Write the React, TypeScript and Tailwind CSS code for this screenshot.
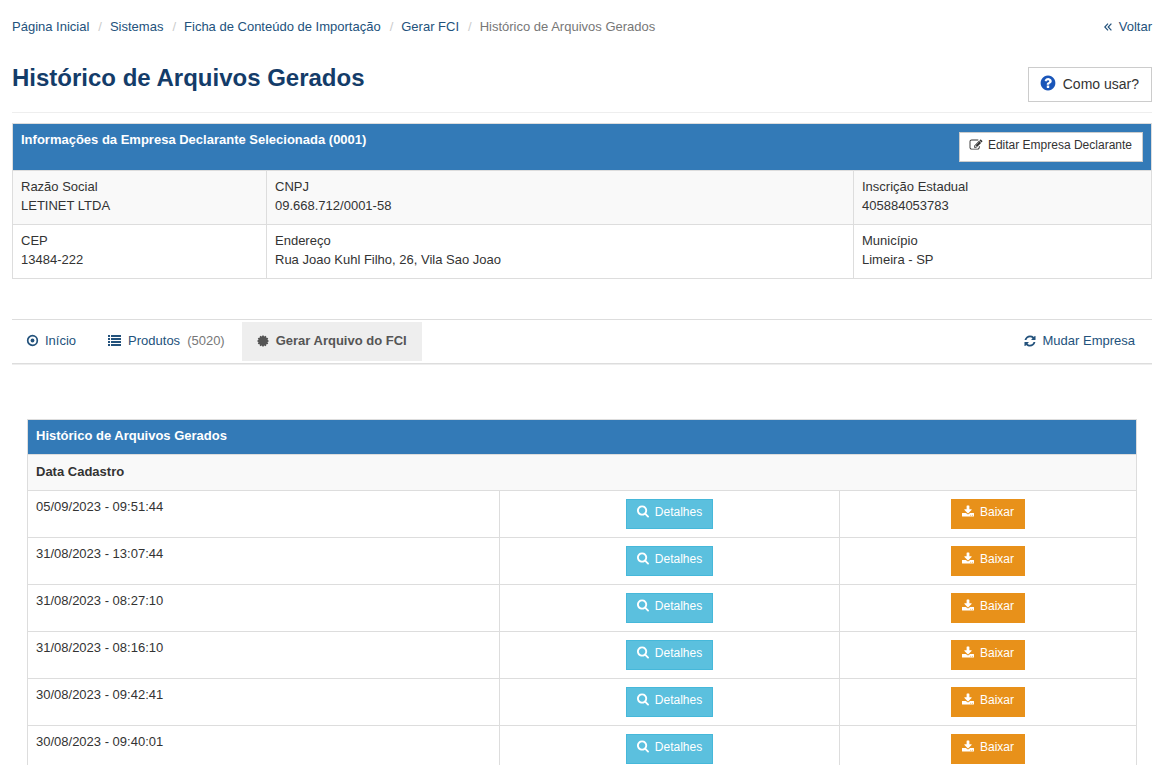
import type { ReactNode } from "react";
import clsx from "clsx";

const BREADCRUMBS = ["Página Inicial", "Sistemas", "Ficha de Conteúdo de Importação", "Gerar FCI"];

const EMPRESA = [
  [
    { label: "Razão Social", value: "LETINET LTDA" },
    { label: "CNPJ", value: "09.668.712/0001-58" },
    { label: "Inscrição Estadual", value: "405884053783" },
  ],
  [
    { label: "CEP", value: "13484-222" },
    { label: "Endereço", value: "Rua Joao Kuhl Filho, 26, Vila Sao Joao" },
    { label: "Município", value: "Limeira - SP" },
  ],
];

const ARQUIVOS = [
  "05/09/2023 - 09:51:44",
  "31/08/2023 - 13:07:44",
  "31/08/2023 - 08:27:10",
  "31/08/2023 - 08:16:10",
  "30/08/2023 - 09:42:41",
  "30/08/2023 - 09:40:01",
];

const ICONS = {
  search:
    "M1216 832q0-185-131.5-316.5t-316.5-131.5-316.5 131.5-131.5 316.5 131.5 316.5 316.5 131.5 316.5-131.5 131.5-316.5zm512 832q0 52-38 90t-90 38q-54 0-90-38l-343-342q-179 124-399 124-143 0-273.5-55.5t-225-150-150-225-55.5-273.5 55.5-273.5 150-225 225-150 273.5-55.5 273.5 55.5 225 150 150 225 55.5 273.5q0 220-124 399l343 343q37 37 37 90z",
  download:
    "M1344 1344q0-26-19-45t-45-19-45 19-19 45 19 45 45 19 45-19 19-45zm256 0q0-26-19-45t-45-19-45 19-19 45 19 45 45 19 45-19 19-45zm128-224v320q0 40-28 68t-68 28h-1472q-40 0-68-28t-28-68v-320q0-40 28-68t68-28h465l135 136q58 56 136 56t136-56l136-136h464q40 0 68 28t28 68zm-325-569q17 41-14 70l-448 448q-18 19-45 19t-45-19l-448-448q-31-29-14-70 17-39 59-39h256v-448q0-26 19-45t45-19h256q26 0 45 19t19 45v448h256q42 0 59 39z",
  refresh:
    "M1639 1056q0 5-1 7-64 268-268 434.5t-478 166.5q-146 0-282.5-55t-243.5-157l-129 129q-19 19-45 19t-45-19-19-45v-448q0-26 19-45t45-19h448q26 0 45 19t19 45-19 45l-137 137q71 66 161 102t187 36q134 0 250-65t186-179q11-17 53-117 8-23 30-23h192q13 0 22.5 9.5t9.5 22.5zm25-800v448q0 26-19 45t-45 19h-448q-26 0-45-19t-19-45 19-45l138-138q-148-137-349-137-134 0-250 65t-186 179q-11 17-53 117-8 23-30 23h-199q-13 0-22.5-9.5t-9.5-22.5v-7q65-268 270-434.5t480-166.5q146 0 284 55.5t245 156.5l130-129q19-19 45-19t45 19 19 45z",
  edit:
    "M888 1184l116-116-152-152-116 116v56h96v96h56zm440-720q-16-16-33 1l-350 350q-17 17-1 33t33-1l350-350q17-17 1-33zm80 594v190q0 119-84.5 203.5t-203.5 84.5h-832q-119 0-203.5-84.5t-84.5-203.5v-832q0-119 84.5-203.5t203.5-84.5h832q63 0 117 25 15 7 18 23 3 17-9 29l-49 49q-14 14-32 8-23-6-45-6h-832q-66 0-113 47t-47 113v832q0 66 47 113t113 47h832q66 0 113-47t47-113v-126q0-13 9-22l64-64q15-15 35-7t20 29zm-96-738l288 288-672 672h-288v-288zm444 132l-92 92-288-288 92-92q28-28 68-28t68 28l152 152q28 28 28 68t-28 68z",
  help:
    "M1024 1376v-192q0-14-9-23t-23-9h-192q-14 0-23 9t-9 23v192q0 14 9 23t23 9h192q14 0 23-9t9-23zm256-672q0-88-55.5-163t-138.5-116-170-41q-243 0-371 213-15 24 8 42l132 100q7 6 19 6 16 0 25-12 53-68 86-92 34-24 86-24 48 0 85.5 26t37.5 59q0 38-20 61t-68 45q-63 28-115.5 86.5t-52.5 125.5v36q0 14 9 23t23 9h192q14 0 23-9t9-23q0-19 21.5-49.5t54.5-49.5q32-18 49-28.5t46-35 44.5-48 28-60.5 12.5-81zm384 192q0 209-103 385.5t-279.5 279.5-385.5 103-385.5-103-279.5-279.5-103-385.5 103-385.5 279.5-279.5 385.5-103 385.5 103 279.5 279.5 103 385.5z",
};

function Icon({ name, className }: { name: keyof typeof ICONS; className: string }) {
  return (
    <svg
      viewBox="64 64 1664 1664"
      fill="currentColor"
      aria-hidden="true"
      className={clsx("shrink-0 overflow-visible", className)}
    >
      <path d={ICONS[name]} />
    </svg>
  );
}

function AngleDoubleLeft() {
  return (
    <svg viewBox="0 0 8 8" fill="none" stroke="currentColor" strokeWidth="1.2" aria-hidden="true" className="h-2 w-2">
      <path d="M4 .6.8 4 4 7.4M7.4.6 4.2 4l3.2 3.4" />
    </svg>
  );
}

function DotCircle() {
  return (
    <svg viewBox="0 0 11 11" aria-hidden="true" className="h-[11px] w-[11px] overflow-visible">
      <circle cx="5.5" cy="5.5" r="4.8" fill="none" stroke="currentColor" strokeWidth="1.7" />
      <circle cx="5.5" cy="5.5" r="1.9" fill="currentColor" />
    </svg>
  );
}

function List() {
  return (
    <svg viewBox="0 0 13 11" fill="currentColor" aria-hidden="true" className="h-[11px] w-[13px]">
      <path d="M0 0h2v2H0zM3 0h10v2H3zM0 3h2v2H0zM3 3h10v2H3zM0 6h2v2H0zM3 6h10v2H3zM0 9h2v2H0zM3 9h10v2H3z" />
    </svg>
  );
}

function Certificate() {
  // 12 pointed seal
  const points = Array.from({ length: 24 }, (_, i) => {
    const r = i % 2 ? 4.7 : 6;
    const a = (i * Math.PI) / 12;
    return `${6 + r * Math.sin(a)},${6 - r * Math.cos(a)}`;
  }).join(" ");
  return (
    <svg viewBox="0 0 12 12" fill="currentColor" aria-hidden="true" className="h-3 w-3">
      <polygon points={points} />
    </svg>
  );
}

function SmallButton({ className, children }: { className: string; children: ReactNode }) {
  return (
    <button
      type="button"
      className={clsx("inline-flex h-[30px] items-start border px-[10px] pt-[3px] text-xs leading-[18px]", className)}
    >
      {children}
    </button>
  );
}

export default function App() {
  return (
    <div className="min-h-screen bg-white pr-[10px] pl-3 font-['Liberation_Sans',Arial,sans-serif] text-[13px] leading-[19px] text-[#333]">
      {/* Breadcrumb */}
      <nav className="flex items-center justify-between pt-[17px] text-[#23527c]">
        <ol className="flex">
          {BREADCRUMBS.map((item) => (
            <li key={item} className="flex">
              <a href="#" className="hover:underline">{item}</a>
              <span className="pr-2 pl-[9px] text-[#ccc]">/</span>
            </li>
          ))}
          <li className="text-[#777]">Histórico de Arquivos Gerados</li>
        </ol>
        <a href="#" className="flex items-center gap-[7px]">
          <AngleDoubleLeft />
          Voltar
        </a>
      </nav>

      <header className="flex items-start justify-between border-b border-[#eee] pb-[10px] pt-[31px]">
        <h1 className="-mt-1 text-2xl leading-[30px] font-bold text-[#143c69]">Histórico de Arquivos Gerados</h1>
        <button type="button" className="flex h-[35px] items-start gap-[7px] border border-[#ccc] pt-[6px] pr-3 pl-[11px] text-sm">
          <Icon name="help" className="mt-px h-4 w-4 text-[#1a56b9]" />
          Como usar?
        </button>
      </header>

      {/* Empresa */}
      <table className="mt-[10px] w-full table-fixed border-collapse">
        <colgroup>
          <col className="w-[254px]" />
          <col />
          <col className="w-[298px]" />
        </colgroup>
        <thead>
          <tr>
            <th colSpan={3} className="border border-[#ddd] bg-[#337ab7] p-2 text-left text-white">
              <div className="flex items-start justify-between">
                <span className="leading-4">Informações da Empresa Declarante Selecionada (0001)</span>
                <SmallButton className="gap-[6px] border-[#ccc] bg-white font-normal text-[#333]">
                  <Icon name="edit" className="mt-[3px] h-3 w-3" />
                  Editar Empresa Declarante
                </SmallButton>
              </div>
            </th>
          </tr>
        </thead>
        <tbody>
          {EMPRESA.map((row, i) => (
            <tr key={i} className="odd:bg-[#f9f9f9]">
              {row.map(({ label, value }) => (
                <td key={label} className="border border-[#ddd] px-2 pt-[6px] pb-[9px] align-top">
                  <p>{label}</p>
                  <p>{value}</p>
                </td>
              ))}
            </tr>
          ))}
        </tbody>
      </table>

      {/* Abas */}
      <nav className="mt-10 flex h-[45px] justify-between border-t border-b border-[#ddd] py-[2px] shadow-[0_1px_0_#eee]">
        <ul className="flex">
          <li>
            <a href="#" className="flex h-[39px] items-center gap-[7px] px-[15px] pb-[2px] text-[#23527c]">
              <DotCircle />
              Início
            </a>
          </li>
          <li>
            <a href="#" className="flex h-[39px] items-center gap-[7px] px-[17px] pb-[2px] text-[#23527c]">
              <List />
              Produtos
              <span className="text-[#777]">(5020)</span>
            </a>
          </li>
          <li>
            <a href="#" className="flex h-[39px] items-center gap-[7px] bg-[#eee] px-[15px] pb-[2px] font-bold text-[#555]">
              <Certificate />
              Gerar Arquivo do FCI
            </a>
          </li>
        </ul>
        <a href="#" className="flex h-[39px] items-center gap-[7px] px-[17px] pb-[2px] text-[#23527c]">
          <Icon name="refresh" className="h-3 w-3" />
          Mudar Empresa
        </a>
      </nav>

      {/* Histórico */}
      <main className="px-[15px] pt-[55px]">
        <table className="w-full table-fixed border-collapse">
          <colgroup>
            <col />
            <col className="w-[340px]" />
            <col className="w-[297px]" />
          </colgroup>
          <thead>
            <tr>
              <th colSpan={3} className="border border-[#ddd] bg-[#337ab7] px-2 pt-[6px] pb-[9px] text-left text-white">
                Histórico de Arquivos Gerados
              </th>
            </tr>
            <tr>
              <th colSpan={3} className="border border-[#ddd] bg-[#f9f9f9] px-2 pt-[7px] pb-[9px] text-left">
                Data Cadastro
              </th>
            </tr>
          </thead>
          <tbody>
            {ARQUIVOS.map((data) => (
              <tr key={data}>
                <td className="border border-[#ddd] px-2 pt-[6px] align-top">{data}</td>
                <td className="border border-[#ddd] p-2 text-center align-top">
                  <div className="flex justify-center">
                    <SmallButton className="gap-[6px] border-[#46b8da] bg-[#5bc0de] text-white">
                      <Icon name="search" className="mt-[2px] h-3 w-3" />
                      Detalhes
                    </SmallButton>
                  </div>
                </td>
                <td className="border border-[#ddd] p-2 text-center align-top">
                  <div className="flex justify-center">
                    <SmallButton className="gap-[6px] border-[#e8911a] bg-[#e8911a] text-white">
                      <Icon name="download" className="mt-[3px] h-3 w-3" />
                      Baixar
                    </SmallButton>
                  </div>
                </td>
              </tr>
            ))}
          </tbody>
        </table>
      </main>
    </div>
  );
}
